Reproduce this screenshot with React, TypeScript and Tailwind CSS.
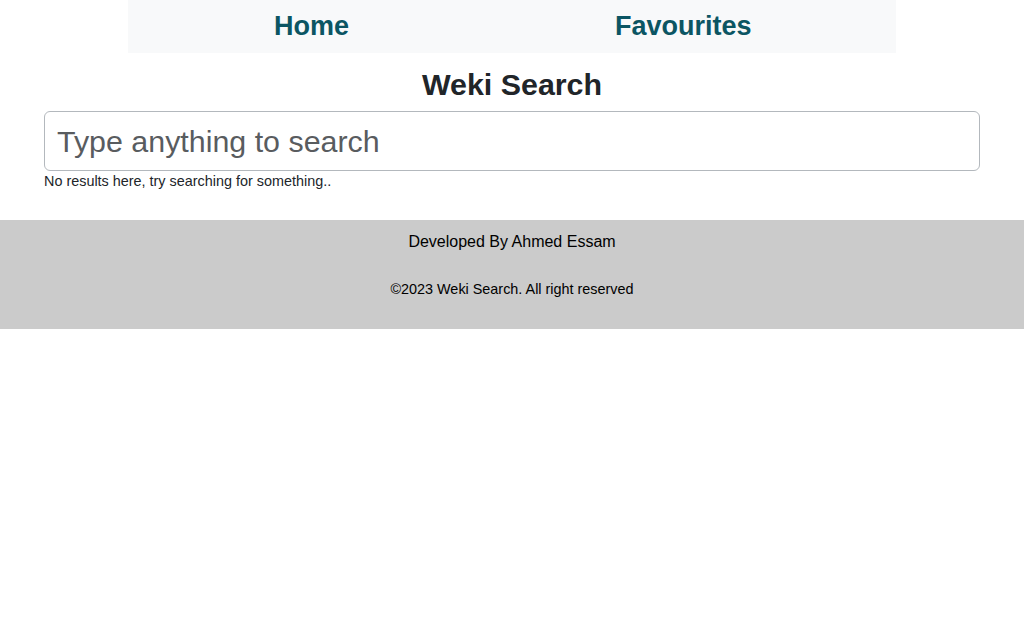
export default function App() {
  return (
    <div className="min-h-screen bg-white font-['Liberation_Sans',Arial,sans-serif] text-[#212529]">
      <nav className="mx-auto flex h-[53px] w-[768px] items-center bg-[#f8f9fa]">
        <a href="#" className="ml-[146px] text-[27px] font-bold text-[#0b5563]">
          Home
        </a>
        <a href="#" className="ml-[266px] text-[27px] font-bold text-[#0b5563]">
          Favourites
        </a>
      </nav>

      <main className="px-[44px]">
        <h2 className="mt-[12px] h-[46px] text-center text-[30.4px] leading-[38px] font-bold">Weki Search</h2>
        <input
          type="text"
          placeholder="Type anything to search"
          className="block h-[60px] w-full rounded-[6px] border border-[#b3b8bd] px-[12px] text-[30.4px] outline-none placeholder:text-[#595c5f]"
        />
        <p className="text-[14.4px] leading-[20px]">No results here, try searching for something..</p>
      </main>

      <footer className="mt-[29px] flex h-[109px] flex-col items-center bg-[#cbcbcb] text-black">
        <p className="mt-[13px] text-[16px] leading-[18px]">Developed By Ahmed Essam</p>
        <p className="mt-[30px] text-[14.4px] leading-[16px]">©2023 Weki Search. All right reserved</p>
      </footer>
    </div>
  );
}
